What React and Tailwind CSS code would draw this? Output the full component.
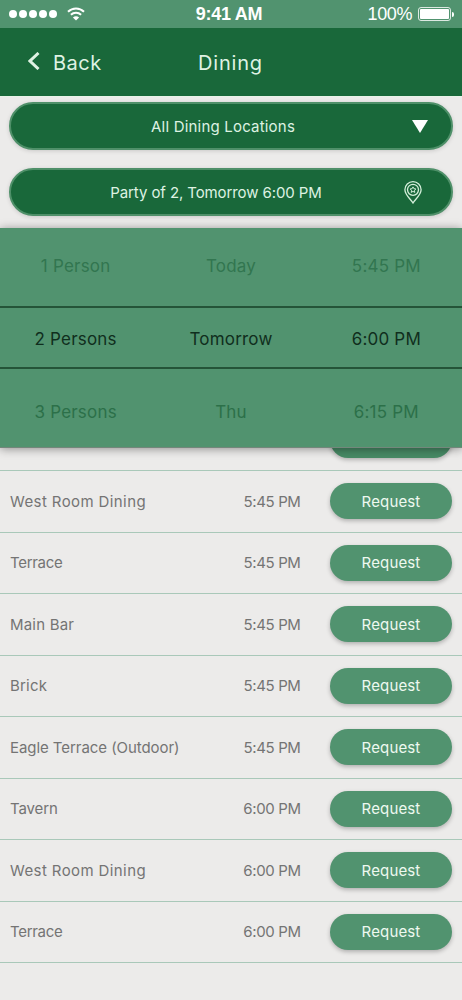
const pickerRows = [
  ['1 Person', 'Today', '5:45 PM'],
  ['2 Persons', 'Tomorrow', '6:00 PM'],
  ['3 Persons', 'Thu', '6:15 PM'],
];

const pickerStyles = [
  'h-[78px] pt-[28px] text-[#327650]',
  'h-[63px] border-y-2 border-[#245438] pt-[21px] text-[#102e1d]',
  'pt-[33px] text-[#2c7049]',
];

const slots = [
  { name: 'West Room Dining', time: '5:45 PM', tracking: 'tracking-[0.4px]' },
  { name: 'Terrace', time: '5:45 PM', tracking: 'tracking-[-0.3px]' },
  { name: 'Main Bar', time: '5:45 PM', tracking: 'tracking-[0.2px]' },
  { name: 'Brick', time: '5:45 PM', tracking: 'tracking-[0.2px]' },
  { name: 'Eagle Terrace (Outdoor)', time: '5:45 PM', tracking: 'tracking-[-0.06px]' },
  { name: 'Tavern', time: '6:00 PM', tracking: 'tracking-[-0.1px]' },
  { name: 'West Room Dining', time: '6:00 PM', tracking: 'tracking-[0.4px]' },
  { name: 'Terrace', time: '6:00 PM', tracking: 'tracking-[-0.3px]' },
];

function StatusBar() {
  return (
    <div className="grid h-7 grid-cols-3 items-center bg-[#51936f] pl-[9px] pr-2 font-['Liberation_Sans',sans-serif] text-white">
      <div className="flex items-center gap-[2px]">
        {[0, 1, 2, 3, 4].map((dot) => (
          <span key={dot} className="h-[8px] w-[8px] rounded-full bg-white" />
        ))}
        <svg className="ml-[8px]" width="18" height="14" viewBox="0 0 18 14" fill="none" stroke="white" strokeWidth="2">
          <path d="M1 4.7C5.5.4 12.5.4 17 4.7" />
          <path d="M3.9 7.8C6.8 5 11.2 5 14.1 7.8" />
          <path d="M9 13.6L5.9 10.5C7.7 8.8 10.3 8.8 12.1 10.5Z" fill="white" stroke="none" />
        </svg>
      </div>
      <div className="-ml-[5px] whitespace-nowrap text-center text-[18px] font-bold leading-7 tracking-[-0.3px]">
        9:41 AM
      </div>
      <div className="flex items-center justify-end">
        <span className="mr-[6px] text-[18px] leading-7 tracking-[-0.4px]">100%</span>
        <span className="h-[14px] w-[33px] rounded-[3px] border border-white/80 p-px">
          <span className="block h-full rounded-[1px] bg-white" />
        </span>
        <span className="ml-px h-[5px] w-[2px] rounded-r-full bg-white" />
      </div>
    </div>
  );
}

function Header() {
  return (
    <header className="grid h-[68px] grid-cols-3 items-center bg-[#19683a] pt-px text-[20px] text-[#dff2e3]">
      <button className="flex items-center pl-[28px]">
        <svg className="-mt-[3px] mr-[13px]" width="12" height="18" viewBox="0 0 12 18" fill="none" stroke="currentColor" strokeWidth="3">
          <path d="M10.5 1L2 9L10.5 17" />
        </svg>
        <span className="tracking-[0.5px]">Back</span>
      </button>
      <h1 className="-ml-[1px] text-center tracking-[0.8px]">Dining</h1>
    </header>
  );
}

function PinIcon() {
  return (
    <svg width="18" height="23" viewBox="0 0 18 23" fill="none" stroke="#d4efda" strokeWidth="1.3">
      <path d="M9 22C7 18.5.9 14 .9 8.8A8.1 8.1 0 0 1 17.1 8.8C17.1 14 11 18.5 9 22Z" />
      <circle cx="9" cy="8.8" r="5.5" />
      <path d="M9 5.9L9.9 7.7L11.9 8L10.4 9.4L10.8 11.4L9 10.4L7.2 11.4L7.6 9.4L6.1 8L8.1 7.7Z" strokeWidth="1" />
    </svg>
  );
}

function FilterPill({ children, icon }) {
  return (
    <button className="grid h-12 w-full grid-cols-[44px_1fr_76px] items-center rounded-full border-2 border-[#4f9069] bg-[#19683a] text-[15px] text-[#def2e2] shadow-[0_1px_4px_rgba(0,0,0,0.15)]">
      <span />
      {children}
      <span className="flex justify-center">{icon}</span>
    </button>
  );
}

function Picker() {
  return (
    <div className="relative z-10 h-[220px] border-b border-[#73877b] bg-[#51936f] text-[17px] leading-5 tracking-[0.2px] shadow-[0_1px_9px_rgba(0,0,0,0.4)]">
      {pickerRows.map((row, idx) => (
        <div key={row[0]} className={pickerStyles[idx]}>
          <div className="-mx-[2px] grid grid-cols-3 text-center">
            {row.map((value) => (
              <span key={value}>{value}</span>
            ))}
          </div>
        </div>
      ))}
    </div>
  );
}

function SlotRow({ name, time, tracking }) {
  return (
    <div className="flex h-[61.5px] items-center border-b border-[#a9c8b9] px-[10px] text-[15px] text-[#747474]">
      <span className={`flex-1 pt-px ${tracking}`}>{name}</span>
      <span className="mr-[27px] w-[62px] pt-px text-center tracking-[-0.35px]">{time}</span>
      <button className="h-9 w-[122px] shrink-0 rounded-full bg-[#51936f] pt-px tracking-[0.15px] text-[#eef9f0] shadow-[0_2px_4px_rgba(0,0,0,0.25)]">
        Request
      </button>
    </div>
  );
}

export default function App() {
  return (
    <div className="h-[1000px] w-[462px] overflow-hidden bg-[#ecebea] font-[Inter,sans-serif]">
      <StatusBar />
      <Header />
      <div className="flex h-[132px] flex-col gap-[18px] border-t border-[#e8f3e8] px-[9px] pt-[5px]">
        <FilterPill
          icon={
            <svg width="16" height="13" viewBox="0 0 16 13" className="ml-[14px]">
              <path d="M0 0H16L8 13Z" fill="white" />
            </svg>
          }
        >
          <span className="pl-[16px] pt-[2px] tracking-[0.2px]">All Dining Locations</span>
        </FilterPill>
        <FilterPill icon={<PinIcon />}>
          <span className="pl-[2px] pt-[2px] tracking-[-0.1px]">Party of 2, Tomorrow 6:00 PM</span>
        </FilterPill>
      </div>
      <Picker />
      {/* Row scrolled under the picker, only the foot of its button shows */}
      <div className="flex h-[23px] items-end justify-end overflow-hidden border-b border-[#a9c8b9] pb-[12px] pr-[10px]">
        <span className="h-9 w-[122px] shrink-0 rounded-full bg-[#478a65] shadow-[0_2px_4px_rgba(0,0,0,0.25)]" />
      </div>
      {slots.map((slot, idx) => (
        <SlotRow key={idx} {...slot} />
      ))}
    </div>
  );
}
